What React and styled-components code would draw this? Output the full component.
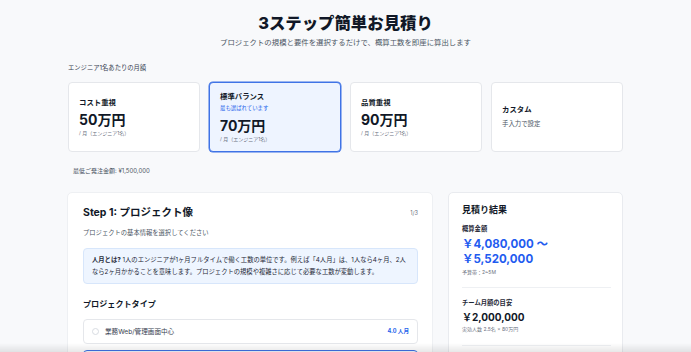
import React from 'react';
import styled, { createGlobalStyle } from 'styled-components';

const GlobalStyle = createGlobalStyle`
	html, body {
		margin: 0;
		padding: 0;
		background: #f8f9fb;
		font-family: 'Inter', 'Noto Sans CJK JP', sans-serif;
		color: #111827;
	}
	* {
		box-sizing: border-box;
	}
`;

const plans = [
	{ id: 'cost', title: 'コスト重視', price: '50万円', unit: '/ 月（エンジニア1名）' },
	{
		id: 'standard',
		title: '標準バランス',
		tag: '最も選ばれています',
		price: '70万円',
		unit: '/ 月（エンジニア1名）',
		active: true,
	},
	{ id: 'quality', title: '品質重視', price: '90万円', unit: '/ 月（エンジニア1名）' },
	{ id: 'custom', title: 'カスタム', note: '手入力で設定' },
];

const projectTypes = [
	{ id: 'web', label: '業務Web/管理画面中心', effort: '4.0 人月' },
	{ id: 'ec', label: 'ECサイト/予約システム', effort: '6.0 人月', active: true },
];

const App = () => {
	return (
		<>
			<GlobalStyle />
			<Page>
				<Hero>
					<h1>3ステップ簡単お見積り</h1>
					<p>プロジェクトの規模と要件を選択するだけで、概算工数を即座に算出します</p>
				</Hero>

				<SectionLabel>エンジニア1名あたりの月額</SectionLabel>
				<PlanGrid>
					{plans.map((plan) => (
						<PlanCard key={plan.id} $active={plan.active}>
							<PlanTitle>{plan.title}</PlanTitle>
							{plan.tag && <PlanTag>{plan.tag}</PlanTag>}
							{plan.price && <PlanPrice>{plan.price}</PlanPrice>}
							{plan.unit && <PlanUnit>{plan.unit}</PlanUnit>}
							{plan.note && <PlanNote>{plan.note}</PlanNote>}
						</PlanCard>
					))}
				</PlanGrid>
				<MinOrder>最低ご発注金額: ¥1,500,000</MinOrder>

				<Columns>
					<StepCard>
						<StepHeader>
							<h2>Step 1: プロジェクト像</h2>
							<span>1/3</span>
						</StepHeader>
						<StepLead>プロジェクトの基本情報を選択してください</StepLead>
						<InfoBox>
							<strong>人月とは?</strong> 1人のエンジニアが1ヶ月フルタイムで働く工数の単位です。例えば「4人月」は、1人なら4ヶ月、2人
							<br />
							なら2ヶ月かかることを意味します。プロジェクトの規模や複雑さに応じて必要な工数が変動します。
						</InfoBox>
						<GroupTitle>プロジェクトタイプ</GroupTitle>
						<OptionList>
							{projectTypes.map((type) => (
								<OptionRow key={type.id} $active={type.active}>
									<Radio $active={type.active} />
									<OptionLabel>{type.label}</OptionLabel>
									<OptionEffort>{type.effort}</OptionEffort>
								</OptionRow>
							))}
						</OptionList>
					</StepCard>

					<ResultCard>
						<ResultTitle>見積り結果</ResultTitle>
						<ResultBlock>
							<ResultLabel>概算金額</ResultLabel>
							<BigAmount>
								<span>￥4,080,000 ～</span>
								<span>￥5,520,000</span>
							</BigAmount>
							<ResultNote>予算帯：2~5M</ResultNote>
						</ResultBlock>
						<ResultBlock>
							<ResultLabel>チーム月額の目安</ResultLabel>
							<TeamAmount>￥2,000,000</TeamAmount>
							<ResultNote>実効人数 2.5名 × 80万円</ResultNote>
						</ResultBlock>
					</ResultCard>
				</Columns>
			</Page>
			<BottomFade />
		</>
	);
};

const Page = styled.main`
	width: 555px;
	margin: 0 auto;
	padding-top: 13px;
	padding-bottom: 40px;
`;

const Hero = styled.header`
	text-align: center;
	h1 {
		margin: 0;
		font-size: 16.4px;
		line-height: 20px;
		font-weight: 800;
		color: #111827;
	}
	p {
		margin: 5px 0 0;
		font-size: 7.4px;
		line-height: 10px;
		color: #4b5563;
	}
`;

const SectionLabel = styled.div`
	margin-top: 16px;
	font-size: 6.3px;
	line-height: 9px;
	color: #374151;
`;

const PlanGrid = styled.div`
	margin-top: 9px;
	display: grid;
	grid-template-columns: repeat(4, 1fr);
	gap: 9px;
`;

const PlanCard = styled.div`
	height: 70px;
	padding: 0 10px;
	display: flex;
	flex-direction: column;
	justify-content: center;
	background: ${(p) => (p.$active ? '#eef4ff' : '#ffffff')};
	border: 1px solid ${(p) => (p.$active ? '#3f73e6' : '#e5e7eb')};
	border-radius: 4px;
	box-shadow: ${(p) => (p.$active ? '0 0 0 0.5px #3f73e6' : 'none')};
`;

const PlanTitle = styled.div`
	font-size: 7.4px;
	line-height: 10px;
	font-weight: 700;
	color: #111827;
`;

const PlanTag = styled.div`
	margin-top: 3px;
	margin-bottom: 2px;
	font-size: 5.4px;
	line-height: 7px;
	color: #2563eb;
`;

const PlanPrice = styled.div`
	margin-top: 4px;
	font-size: 14px;
	line-height: 16px;
	font-weight: 700;
	color: #111827;
`;

const PlanUnit = styled.div`
	margin-top: 2px;
	font-size: 5px;
	line-height: 7px;
	color: #6b7280;
`;

const PlanNote = styled.div`
	margin-top: 5px;
	font-size: 6.4px;
	line-height: 9px;
	color: #4b5563;
`;

const MinOrder = styled.div`
	margin-top: 14px;
	padding-left: 5px;
	font-size: 6px;
	line-height: 9px;
	color: #4b5563;
`;

const Columns = styled.div`
	margin-top: 17px;
	margin-left: -1px;
	display: grid;
	grid-template-columns: 366px 175px;
	gap: 15px;
	align-items: start;
`;

const StepCard = styled.section`
	background: #ffffff;
	border: 1px solid #eef0f3;
	border-radius: 5px;
	padding: 13px 14px 20px 15px;
`;

const StepHeader = styled.div`
	display: flex;
	justify-content: space-between;
	align-items: center;
	h2 {
		margin: 0;
		font-size: 10.5px;
		line-height: 14px;
		font-weight: 700;
		color: #111827;
	}
	span {
		font-size: 5.6px;
		color: #6b7280;
	}
`;

const StepLead = styled.p`
	margin: 8.5px 0 0;
	font-size: 6.3px;
	line-height: 9px;
	color: #4b5563;
`;

const InfoBox = styled.div`
	margin-top: 10.5px;
	padding: 5px 8px;
	background: #eef5ff;
	border: 1px solid #d7e6fb;
	border-radius: 4px;
	font-size: 6.3px;
	line-height: 12px;
	color: #1f2937;
	white-space: nowrap;
	strong {
		font-weight: 700;
	}
`;

const GroupTitle = styled.h3`
	margin: 15px 0 0;
	font-size: 8.1px;
	line-height: 11px;
	font-weight: 700;
	color: #111827;
`;

const OptionList = styled.div`
	margin-top: 8.5px;
	display: flex;
	flex-direction: column;
	gap: 6px;
`;

const OptionRow = styled.div`
	height: 25px;
	padding: 0 8px 0 8px;
	display: flex;
	align-items: center;
	gap: 6px;
	border: 1px solid ${(p) => (p.$active ? '#3f73e6' : '#e5e7eb')};
	background: ${(p) => (p.$active ? '#f3f7ff' : '#ffffff')};
	border-radius: 4px;
`;

const Radio = styled.span`
	width: 7px;
	height: 7px;
	border-radius: 50%;
	border: 1px solid ${(p) => (p.$active ? '#2563eb' : '#d8dce2')};
	background: #ffffff;
	flex-shrink: 0;
`;

const OptionLabel = styled.span`
	flex: 1;
	font-size: 6.6px;
	color: #374151;
`;

const OptionEffort = styled.span`
	font-size: 5.6px;
	font-weight: 700;
	color: #2563eb;
`;

const ResultCard = styled.aside`
	background: #ffffff;
	border: 1px solid #e9ebef;
	border-radius: 5px;
	padding: 11px 11px 20px 13px;
`;

const ResultTitle = styled.h2`
	margin: 0;
	font-size: 9px;
	line-height: 12px;
	font-weight: 700;
	color: #111827;
`;

const ResultBlock = styled.div`
	padding: 8.5px 0 11.5px;
	border-bottom: 1px solid #eef0f3;
	& + & {
		padding-top: 11px;
	}
`;

const ResultLabel = styled.div`
	font-size: 6.3px;
	line-height: 9px;
	font-weight: 700;
	color: #1f2937;
`;

const BigAmount = styled.div`
	margin-top: 3px;
	display: flex;
	flex-direction: column;
	font-size: 11.5px;
	line-height: 15px;
	font-weight: 700;
	color: #1f5cf0;
`;

const TeamAmount = styled.div`
	margin-top: 3px;
	font-size: 10px;
	line-height: 13px;
	font-weight: 700;
	color: #111827;
`;

const ResultNote = styled.div`
	margin-top: 2px;
	font-size: 5px;
	line-height: 7px;
	color: #6b7280;
`;

const BottomFade = styled.div`
	position: fixed;
	left: 0;
	right: 0;
	bottom: 0;
	height: 9px;
	pointer-events: none;
	background: linear-gradient(to bottom, rgba(0, 0, 0, 0), rgba(0, 0, 0, 0.09));
`;

export default App;
